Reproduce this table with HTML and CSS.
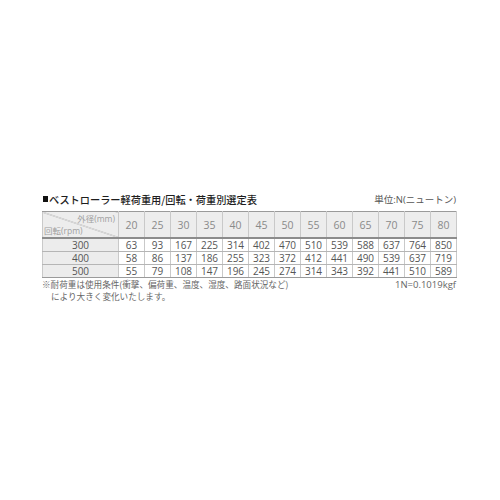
FILE: index.html
```html
<!DOCTYPE html>
<html lang="ja">
<head>
<meta charset="utf-8">
<link rel="stylesheet" href="styles.css">
</head>
<body>
<div class="wrap">
  <div class="head">
    <div class="title"><span class="sq"></span>ベストローラー軽荷重用/回転・荷重別選定表</div>
    <div class="unit">単位:N(ニュートン)</div>
  </div>
  <table class="tbl">
    <colgroup>
      <col class="c0">
      <col><col><col><col><col><col><col><col><col><col><col><col><col>
    </colgroup>
    <thead>
      <tr>
        <th class="diag"><span class="tr">外径(mm)</span><span class="bl">回転(rpm)</span></th>
        <th>20</th><th>25</th><th>30</th><th>35</th><th>40</th><th>45</th><th>50</th><th>55</th><th>60</th><th>65</th><th>70</th><th>75</th><th>80</th>
      </tr>
    </thead>
    <tbody>
      <tr><th>300</th><td>63</td><td>93</td><td>167</td><td>225</td><td>314</td><td>402</td><td>470</td><td>510</td><td>539</td><td>588</td><td>637</td><td>764</td><td>850</td></tr>
      <tr><th>400</th><td>58</td><td>86</td><td>137</td><td>186</td><td>255</td><td>323</td><td>372</td><td>412</td><td>441</td><td>490</td><td>539</td><td>637</td><td>719</td></tr>
      <tr><th>500</th><td>55</td><td>79</td><td>108</td><td>147</td><td>196</td><td>245</td><td>274</td><td>314</td><td>343</td><td>392</td><td>441</td><td>510</td><td>589</td></tr>
    </tbody>
  </table>
  <div class="note">
    <div class="note-l">
      <div>※耐荷重は使用条件(衝撃、偏荷重、温度、湿度、路面状況など)</div>
      <div class="ind">により大きく変化いたします。</div>
    </div>
    <div class="note-r">1N=0.1019kgf</div>
  </div>
</div>
</body>
</html>
```

FILE: styles.css
```css
html, body {
  margin: 0;
  padding: 0;
  background: #fff;
}
body {
  font-family: "Open Sans", "Noto Sans CJK JP", sans-serif;
  color: #555;
}
.wrap {
  width: 414px;
  margin-left: 42px;
  padding-top: 192px;
}
.head {
  display: flex;
  justify-content: space-between;
  align-items: center;
  height: 14px;
  margin-bottom: 5px;
}
.title {
  display: flex;
  align-items: center;
  font-family: "Noto Sans CJK JP", sans-serif;
  font-size: 10.2px;
  font-weight: 500;
  color: #1e1e1e;
}
.sq {
  display: inline-block;
  width: 5px;
  height: 6px;
  background: #111;
  margin-right: 1px;
  margin-left: 1px;
}
.unit {
  font-family: "Open Sans", "Noto Sans CJK JP", sans-serif;
  font-size: 9.5px;
  color: #555;
}
.tbl {
  width: 414px;
  border-collapse: collapse;
  table-layout: fixed;
}
.tbl col { width: 26px; }
.tbl col.c0 { width: 76px; }
.tbl th, .tbl td {
  padding: 0;
  text-align: center;
  font-weight: normal;
  border: 1px solid #c9c9c9;
}
.tbl thead th {
  height: 25px;
  background: #ededed;
  color: #8a8a8a;
  font-size: 10.5px;
  border-top: 1px solid #9a9a9a;
  border-bottom: 2px solid #8c8c8c;
}
.tbl thead th.diag {
  position: relative;
  background: linear-gradient(to top right, #ededed calc(50% - 0.6px), #a8a8a8 50%, #ededed calc(50% + 0.6px));
  border-left: 1px solid #c9c9c9;
}
.diag .tr, .diag .bl {
  position: absolute;
  font-family: "Open Sans", "Noto Sans CJK JP", sans-serif;
  font-size: 8.5px;
  color: #a0a0a0;
  line-height: 10px;
}
.diag .tr { top: 2px; right: 3px; }
.diag .bl { bottom: 1px; left: 1px; }
.tbl tbody th, .tbl tbody td {
  height: 12px;
  line-height: 12px;
  font-size: 10px;
  color: #555;
  border-bottom: 1px solid #b5b5b5;
}
.tbl tbody th {
  background: #ececec;
}
.tbl tbody tr:last-child th, .tbl tbody tr:last-child td {
  border-bottom: 1px solid #9a9a9a;
}
.note {
  display: flex;
  justify-content: space-between;
  align-items: flex-start;
  margin-top: 1px;
  font-size: 8.6px;
  line-height: 11.5px;
  color: #666;
  font-family: "Noto Sans CJK JP", sans-serif;
}
.note-l .ind { padding-left: 9px; }
.note-r {
  font-family: "Open Sans", "Noto Sans CJK JP", sans-serif;
  font-size: 9.5px;
}
```
